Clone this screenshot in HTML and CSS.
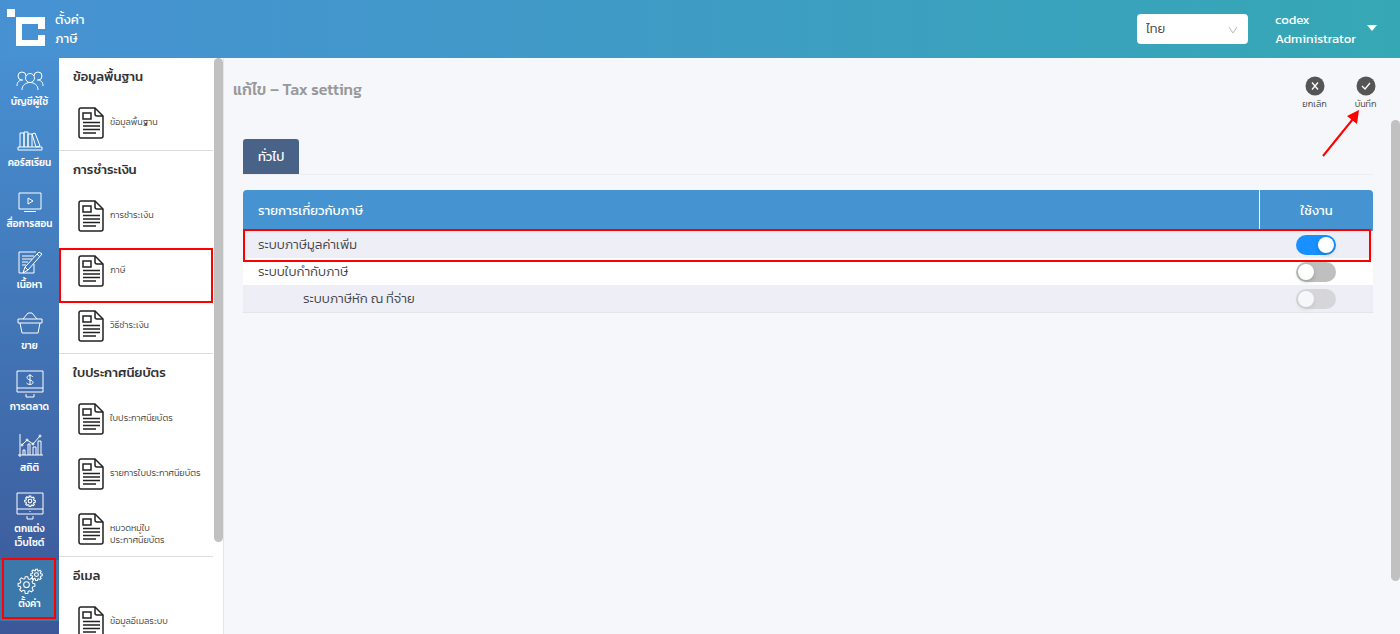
FILE: index.html
```html
<!DOCTYPE html>
<html lang="th">
<head>
  <meta charset="UTF-8">
  <meta name="viewport" content="width=device-width, initial-scale=1.0">
  <title>Tax setting</title>
  <link rel="stylesheet" href="styles.css">
</head>
<body>
  <!-- Shared icons -->
  <svg class="sprite" aria-hidden="true">
    <symbol id="doc" viewBox="0 0 26 32">
      <path d="M3 1h14l8 8v20a2 2 0 0 1-2 2H3a2 2 0 0 1-2-2V3a2 2 0 0 1 2-2z" fill="none" stroke="#222" stroke-width="1.5"/>
      <path d="M17 1v6a2 2 0 0 0 2 2h6M5 6h8v6H5zM5 15.500h17M5 19h17M5 22.500h17M5 26h13" fill="none" stroke="#222" stroke-width="1.5"/>
    </symbol>
    <symbol id="gear" viewBox="-1 -1 22 22">
      <path d="M8.500 1h3l.5 2.500 1.700.700 2.100-1.400 2.100 2.100-1.400 2.100.700 1.700 2.500.500v3l-2.500.500-.700 1.700 1.400 2.100-2.100 2.100-2.100-1.400-1.700.700-.500 2.500h-3L8 17.400l-1.700-.700-2.100 1.400-2.100-2.100 1.400-2.100-.700-1.700L.300 11.700v-3l2.500-.500.700-1.700-1.400-2.100 2.100-2.100 2.100 1.400L8 3.500z"/>
      <circle cx="10" cy="10.200" r="3.300"/>
    </symbol>
  </svg>

  <header class="topbar">
    <svg class="logo" viewBox="0 0 38 38" fill="#fff" aria-hidden="true">
      <path d="M0 0h8v8H0zM9 8h29v12h-7v-5H15v16h16v-5h7v11H9z"/>
    </svg>
    <div class="crumbs">
      <div>ตั้งค่า</div>
      <div>ภาษี</div>
    </div>
    <div class="lang">
      <select aria-label="ภาษา">
        <option>ไทย</option>
      </select>
      <svg class="lang-arrow" viewBox="0 0 10 8" aria-hidden="true"><path d="M1 1l4 6 4-6" fill="none" stroke="#bbb"/></svg>
    </div>
    <button class="user" type="button">
      <span>codex<br>Administrator</span>
      <svg width="10" height="6" viewBox="0 0 10 6" aria-hidden="true"><path d="M0 0h10L5 6z" fill="#fff"/></svg>
    </button>
  </header>

  <div class="layout">
    <nav class="nav">
      <a href="#"><svg viewBox="0 0 28 28"><circle cx="14" cy="12" r="4.500"/><path d="M6 24c0-10 16-10 16 0M10 10a4 4 0 1 0-4 4M18 10a4 4 0 1 1 4 4M1 20c0-4 2-6 6-6M27 20c0-4-2-6-6-6"/></svg><span>บัญชีผู้ใช้</span></a>
      <a href="#"><svg viewBox="0 0 28 28"><path d="M4 20V6h4v14M8 20V5h4v15M12 20V7h4v13M16 7l3-1 5 13-4 1zM2 20h24v3H2z"/></svg><span>คอร์สเรียน</span></a>
      <a href="#"><svg viewBox="0 0 28 28"><path d="M3 5h22v16H3zM12 10l5 3-5 3zM8 23.500h12"/></svg><span>สื่อการสอน</span></a>
      <a href="#"><svg viewBox="0 0 28 28"><path d="M20 3H3v21h15V15M6 7h12M6 10h10M6 13h6M6 16h4M23 3l3 2-14 16-5 3 2-6zM21 5l3 3M9 18l3 3"/></svg><span>เนื้อหา</span></a>
      <a href="#"><svg viewBox="0 0 28 28"><path d="M2 9h24v4H2zM4 13l2 10h16l2-10M7 9l5-6h4l5 6"/></svg><span>ขาย</span></a>
      <a href="#"><svg viewBox="0 0 28 28"><path d="M1 0h26v21H1zM1 17h26M10 23v3h8v-3M17 6c-1-2-6-2-6 .500 0 3 6 2 6 5 0 2.500-5 2.500-6.500.500M14 3v11"/></svg><span>การตลาด</span></a>
      <a href="#"><svg viewBox="0 0 28 28"><path d="M4 2v23M2 23h25M7 23v-5h2v5M12 23V12h2v11M17 23v-8h3v8M22 23V9h3v14M6 13l5-5 6 4 7-8"/><circle cx="6" cy="13" r="1"/><circle cx="11" cy="8" r="1"/><circle cx="17" cy="12" r="1"/><circle cx="24" cy="4" r="1"/></svg><span>สถิติ</span></a>
      <a href="#"><svg viewBox="0 0 28 28"><path d="M1 0h26v21H1zM1 16h26M14 18v1M11 23v3h6v-3"/><use href="#gear" x="8" y="2" width="12" height="12" stroke-width="2"/></svg><span>ตกแต่ง<br>เว็บไซต์</span></a>
      <a class="active" href="#"><svg viewBox="0 0 28 28"><use href="#gear" x="1" y="7" width="19" height="19" stroke-width="1.200"/><use href="#gear" x="14" y="0" width="13" height="13" stroke-width="1.800"/></svg><span>ตั้งค่า</span></a>
    </nav>

    <aside class="panel">
      <section>
        <h2>ข้อมูลพื้นฐาน</h2>
        <a href="#"><svg><use href="#doc"/></svg><span>ข้อมูลพื้นฐาน</span></a>
      </section>
      <section>
        <h2>การชำระเงิน</h2>
        <a href="#"><svg><use href="#doc"/></svg><span>การชำระเงิน</span></a>
        <a class="marked" href="#"><svg><use href="#doc"/></svg><span>ภาษี</span></a>
        <a href="#"><svg><use href="#doc"/></svg><span>วิธีชำระเงิน</span></a>
      </section>
      <section>
        <h2>ใบประกาศนียบัตร</h2>
        <a href="#"><svg><use href="#doc"/></svg><span>ใบประกาศนียบัตร</span></a>
        <a href="#"><svg><use href="#doc"/></svg><span>รายการใบประกาศนียบัตร</span></a>
        <a href="#"><svg><use href="#doc"/></svg><span>หมวดหมู่ใบ<br>ประกาศนียบัตร</span></a>
      </section>
      <section>
        <h2>อีเมล</h2>
        <a href="#"><svg><use href="#doc"/></svg><span>ข้อมูลอีเมลระบบ</span></a>
      </section>
      <div class="thumb panel-thumb"></div>
    </aside>

    <main class="content">
      <div class="page-head">
        <h1>แก้ไข – Tax setting</h1>
        <div class="actions">
          <button type="button">
            <svg viewBox="0 0 20 20"><circle cx="10" cy="10" r="9.500" fill="#555"/><path d="M7 6.500l6 7M13 6.500l-6 7" stroke="#fff" stroke-width="1.300"/></svg>
            <span>ยกเลิก</span>
          </button>
          <button type="button">
            <svg viewBox="0 0 20 20"><circle cx="10" cy="10" r="9.500" fill="#555"/><path d="M6 10l3 3 5-6" fill="none" stroke="#fff" stroke-width="1.300"/></svg>
            <span>บันทึก</span>
          </button>
          <svg class="arrow" viewBox="0 0 40 50" aria-hidden="true"><path d="M2 48L32 11" stroke="#f00" stroke-width="2"/><path d="M38 2l-2 14-10-8z" fill="#f00"/></svg>
        </div>
      </div>

      <div class="tabs">
        <button type="button">ทั่วไป</button>
      </div>

      <table>
        <thead>
          <tr><th>รายการเกี่ยวกับภาษี</th><th>ใช้งาน</th></tr>
        </thead>
        <tbody>
          <tr class="marked">
            <td><label for="vat">ระบบภาษีมูลค่าเพิ่ม</label></td>
            <td><input type="checkbox" id="vat" checked></td>
          </tr>
          <tr>
            <td><label for="invoice">ระบบใบกำกับภาษี</label></td>
            <td><input type="checkbox" id="invoice"></td>
          </tr>
          <tr>
            <td class="sub"><label for="withholding">ระบบภาษีหัก ณ ที่จ่าย</label></td>
            <td><input type="checkbox" id="withholding" disabled></td>
          </tr>
        </tbody>
      </table>
      <div class="thumb content-thumb"></div>
    </main>
  </div>
</body>
</html>
```
FILE: styles.css
```css
* {
  box-sizing: border-box;
}

body {
  display: flex;
  flex-direction: column;
  height: 100vh;
  margin: 0;
  overflow: hidden;
  font-family: Kanit, "Noto Sans Thai", "Noto Sans", sans-serif;
  font-size: 13px;
  font-weight: 300;
  color: #444;
  background: #f5f7fb;
}

button,
select {
  font: inherit;
  border: none;
  cursor: pointer;
}

a {
  color: inherit;
  text-decoration: none;
}

.sprite {
  position: absolute;
  width: 0;
  height: 0;
}

/* Top bar */
.topbar {
  display: flex;
  align-items: center;
  flex: none;
  height: 58px;
  padding: 0 23px 0 7px;
  color: #fff;
  font-weight: 400;
  line-height: 19px;
  background: linear-gradient(90deg, #4791d3, #35a8b5);
}

.logo {
  width: 38px;
  height: 38px;
  margin-bottom: 2px;
}

.crumbs {
  margin-left: 10px;
}

.lang {
  position: relative;
  margin-left: auto;
}

.lang select {
  width: 111px;
  height: 30px;
  padding: 0 9px 2px;
  color: #444;
  font-weight: 300;
  background: #fff;
  border-radius: 4px;
  appearance: none;
}

.lang-arrow {
  position: absolute;
  top: 12px;
  right: 10px;
  width: 10px;
  height: 8px;
}

.user {
  display: flex;
  align-items: center;
  justify-content: space-between;
  width: 102px;
  margin-left: 27px;
  padding: 0;
  color: #fff;
  text-align: left;
  background: none;
}

.user svg {
  margin-bottom: 2px;
}

.layout {
  display: flex;
  flex: 1;
  min-height: 0;
}

/* Main menu */
.nav {
  flex: none;
  width: 59px;
  color: #fff;
  font-size: 10px;
  font-weight: 500;
  line-height: 14px;
  text-align: center;
  background: linear-gradient(180deg, #4790d2, #3c5797);
}

.nav a {
  position: relative;
  display: flex;
  flex-direction: column;
  align-items: center;
  gap: 1px;
  padding: 8px 0 10px;
}

.nav svg {
  width: 28px;
  height: 28px;
  overflow: visible;
  fill: none;
  stroke: #fff;
  stroke-width: 1;
}

.nav .active {
  background: #3c79aa;
}

.nav .active::after {
  content: "";
  position: absolute;
  inset: -2px 3px 2px 2px;
  border: 2px solid #f00;
}

/* Settings list */
.panel {
  position: relative;
  flex: none;
  width: 165px;
  padding-right: 10px;
  overflow: hidden;
  background: #fff;
  border-right: 1px solid #e4e6eb;
}

.panel section + section {
  border-top: 1px solid #ddd;
}

.panel h2 {
  margin: 0;
  padding-left: 14px;
  color: #333;
  font-size: 13px;
  font-weight: 500;
  line-height: 37px;
}

.panel a {
  position: relative;
  display: flex;
  align-items: flex-start;
  gap: 6px;
  height: 55px;
  padding: 12px 0 0 19px;
  font-size: 9px;
  line-height: 12px;
}

.panel a svg {
  flex: none;
  width: 26px;
  height: 32px;
}

.panel a span {
  padding-top: 9px;
}

.panel .marked::after {
  content: "";
  position: absolute;
  inset: 5px 0 -5px;
  border: 2px solid #f00;
}

.thumb {
  position: absolute;
  width: 9px;
  background: #c1c1c1;
  border-radius: 5px;
}

.panel-thumb {
  top: 0;
  right: 0;
  height: 84%;
}

/* Page */
.content {
  position: relative;
  flex: 1;
  padding: 17px 27px 0 19px;
}

.content-thumb {
  top: 62px;
  right: 0;
  height: 80%;
}

.page-head {
  display: flex;
  justify-content: space-between;
  height: 64px;
  margin-right: -18px;
  margin-left: -10px;
}

h1 {
  margin: 0;
  color: #999;
  font-size: 16px;
  font-weight: 500;
  line-height: 28px;
}

.actions {
  position: relative;
  display: flex;
}

.actions button {
  display: flex;
  flex-direction: column;
  align-items: center;
  width: 51px;
  height: 40px;
  padding: 1px 0 0;
  color: #444;
  font-size: 9px;
  line-height: 16px;
  background: none;
}

.actions button svg {
  width: 20px;
  height: 20px;
}

.arrow {
  position: absolute;
  top: 33px;
  right: 30px;
  width: 40px;
  height: 50px;
}

.tabs {
  margin-bottom: 15px;
  border-bottom: 1px solid #eceef1;
}

.tabs button {
  display: block;
  height: 35px;
  padding: 0 15px;
  color: #fff;
  font-weight: 400;
  background: #486288;
  border-radius: 3px 3px 0 0;
}

table {
  width: 100%;
  border-spacing: 0;
  border-bottom: 1px solid #e4e5eb;
}

th {
  height: 41px;
  padding: 0 15px;
  color: #fff;
  font-weight: 400;
  text-align: left;
  background: #4594d1;
}

th:first-child {
  border-radius: 4px 0 0 0;
}

th:last-child {
  width: 114px;
  text-align: center;
  border-left: 1px solid #fff;
  border-radius: 0 4px 0 0;
}

td {
  height: 27px;
  padding: 0 15px;
  line-height: 20px;
  background: #fff;
}

td:last-child {
  text-align: center;
}

tbody tr:nth-child(odd) td {
  background: #eeeff6;
}

tbody .marked {
  position: relative;
}

tbody .marked::after {
  content: "";
  position: absolute;
  inset: -2px 2px -4px 0;
  border: 2px solid #f00;
  pointer-events: none;
}

.sub {
  padding-left: 60px;
}

input[type="checkbox"] {
  display: block;
  width: 40px;
  height: 20px;
  margin: 0 auto;
  padding: 2px;
  background: #bfbfbf;
  border-radius: 10px;
  appearance: none;
  cursor: pointer;
}

input[type="checkbox"]::before {
  content: "";
  display: block;
  width: 16px;
  height: 16px;
  background: #fff;
  border-radius: 50%;
  box-shadow: 0 2px 4px rgba(0, 35, 11, 0.2);
}

input[type="checkbox"]:checked {
  background: #1890ff;
}

input[type="checkbox"]:checked::before {
  margin-left: auto;
}

input[type="checkbox"]:disabled {
  opacity: 0.5;
  cursor: default;
}
```
